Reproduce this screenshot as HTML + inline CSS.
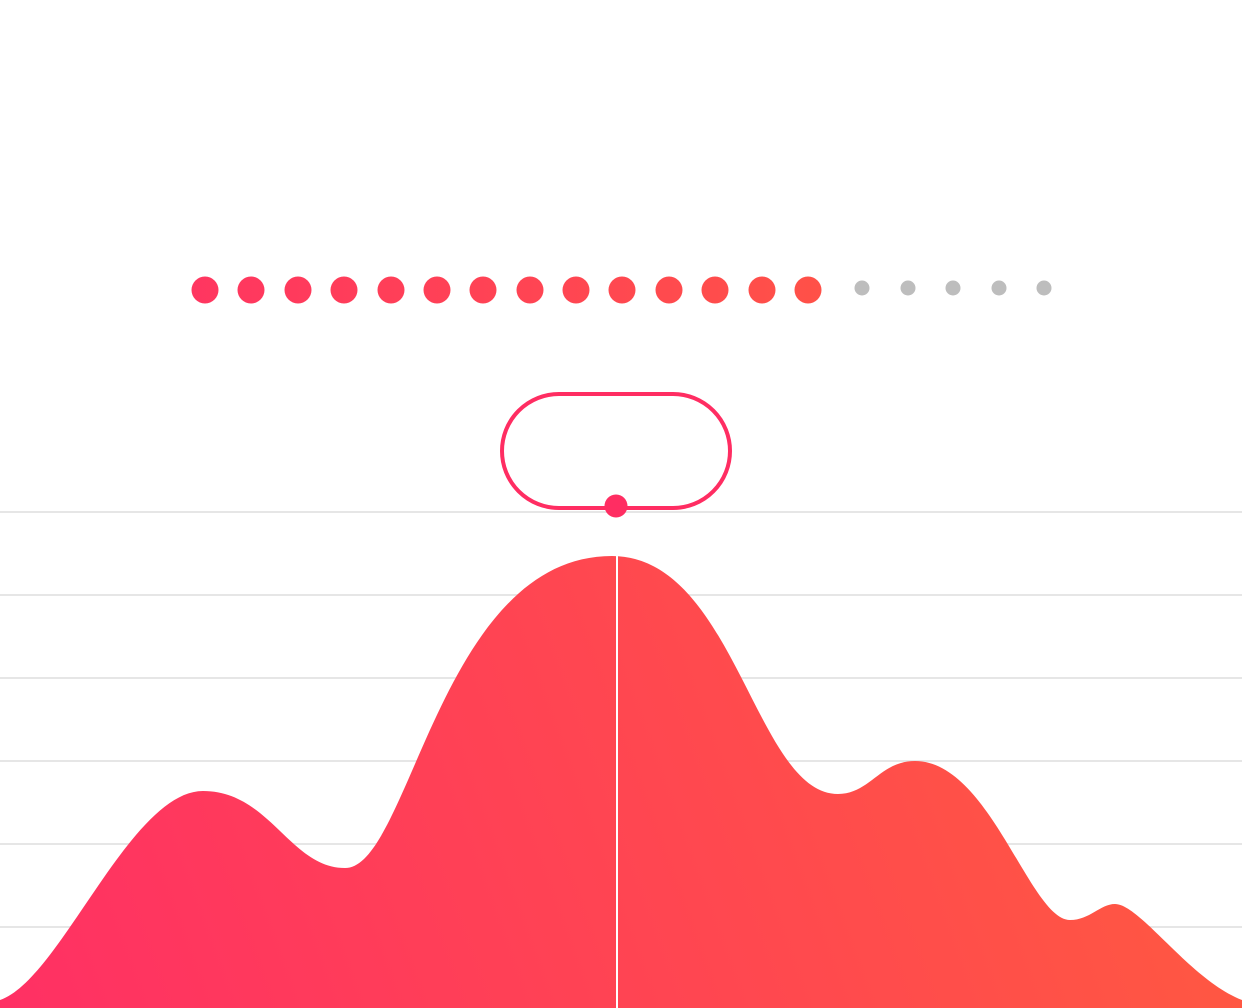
<!DOCTYPE html>
<html><head><meta charset="utf-8"><style>
html,body{margin:0;padding:0;background:#fff;width:1242px;height:1008px;overflow:hidden}
</style></head><body>
<svg width="1242" height="1008" viewBox="0 0 1242 1008" xmlns="http://www.w3.org/2000/svg">
<defs>
<linearGradient id="g" x1="0" y1="1008" x2="1242" y2="556" gradientUnits="userSpaceOnUse">
<stop offset="0" stop-color="#ff3064"/><stop offset="1" stop-color="#ff5c3e"/>
</linearGradient>
<linearGradient id="d" x1="190" y1="0" x2="822" y2="0" gradientUnits="userSpaceOnUse">
<stop offset="0" stop-color="#ff3660"/><stop offset="1" stop-color="#ff5148"/>
</linearGradient>
</defs>
<g stroke="#e6e6e6" stroke-width="2">
<line x1="0" y1="512" x2="1242" y2="512"/><line x1="0" y1="595" x2="1242" y2="595"/>
<line x1="0" y1="678" x2="1242" y2="678"/><line x1="0" y1="761" x2="1242" y2="761"/>
<line x1="0" y1="844" x2="1242" y2="844"/><line x1="0" y1="927" x2="1242" y2="927"/>
</g>
<path fill="url(#g)" d="M0,1000 C60,980 130,791 203,791 C270,791 290,868 345,868 C410,868 440,556 612,556 C735,556 755,794 838,794 C870,794 880,761 915,761 C990,761 1030,920 1070,920 C1090,920 1100,904 1115,904 C1140,904 1190,980 1242,1000 L1242,1008 L0,1008 Z"/>
<rect x="616" y="556" width="2" height="452" fill="#fff"/>
<rect x="502" y="394" width="228" height="114" rx="57" fill="none" stroke="#ff2d62" stroke-width="4"/>
<circle cx="616" cy="506" r="11.5" fill="#ff2d62"/>
<g fill="url(#d)">
<circle cx="205" cy="290" r="13.5"/><circle cx="251" cy="290" r="13.5"/><circle cx="298" cy="290" r="13.5"/>
<circle cx="344" cy="290" r="13.5"/><circle cx="391" cy="290" r="13.5"/><circle cx="437" cy="290" r="13.5"/>
<circle cx="483" cy="290" r="13.5"/><circle cx="530" cy="290" r="13.5"/><circle cx="576" cy="290" r="13.5"/>
<circle cx="622" cy="290" r="13.5"/><circle cx="669" cy="290" r="13.5"/><circle cx="715" cy="290" r="13.5"/>
<circle cx="762" cy="290" r="13.5"/><circle cx="808" cy="290" r="13.5"/>
</g>
<g fill="#bdbdbd">
<circle cx="862" cy="288" r="7.5"/><circle cx="908" cy="288" r="7.5"/><circle cx="953" cy="288" r="7.5"/>
<circle cx="999" cy="288" r="7.5"/><circle cx="1044" cy="288" r="7.5"/>
</g>
</svg>
</body></html>
